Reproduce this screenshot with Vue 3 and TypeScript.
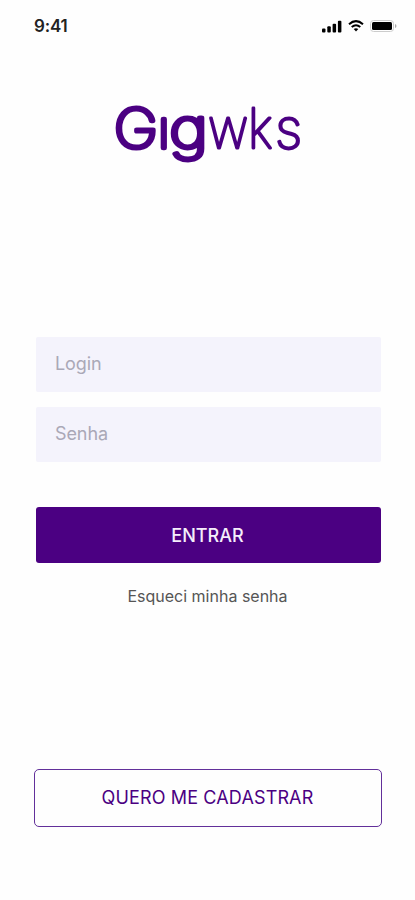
<script setup lang="ts">
import { ref } from 'vue'

interface Glyph {
  char: string
  x: number
  y: number
  sx: number
  sy: number
  bold: boolean
}

const login = ref('')
const senha = ref('')

const wordmark: Glyph[] = [
  { char: 'G', x: 0, y: 42.5, sx: 1.1, sy: 1, bold: true },
  { char: 'ı', x: 43.8, y: 42.5, sx: 1.04, sy: 0.96, bold: true },
  { char: 'g', x: 55.5, y: 42.5, sx: 1.22, sy: 1, bold: true },
  { char: 'w', x: 94.3, y: 43, sx: 0.91, sy: 1, bold: false },
  { char: 'k', x: 134, y: 43, sx: 0.93, sy: 1, bold: false },
  { char: 's', x: 161, y: 43, sx: 1.02, sy: 1, bold: false },
]
</script>

<template>
  <main class="screen">
    <header class="status">
      <span class="time">9:41</span>
      <div class="indicators">
        <svg width="20" height="13" viewBox="0 0 20 13">
          <rect x="0" y="8.5" width="3.5" height="4" rx="1" />
          <rect x="5.3" y="6.3" width="3.5" height="6.2" rx="1" />
          <rect x="10.6" y="3.7" width="3.5" height="8.8" rx="1" />
          <rect x="15.9" y="0.7" width="3.5" height="11.8" rx="1" />
        </svg>
        <svg width="16" height="12" viewBox="0 0 16 12" class="wifi">
          <path d="M1 4.2Q8-2 15 4.2" />
          <path d="M3.7 7Q8 3.4 12.3 7" />
          <path class="dot" d="M5.7 9.1Q8 7.4 10.3 9.1L8 11.5Z" />
        </svg>
        <svg width="27" height="12" viewBox="0 0 27 12">
          <rect class="shell" x="0.5" y="0.5" width="23" height="11" rx="3" />
          <rect x="2" y="2" width="20" height="8" rx="1.5" />
          <path class="cap" d="M25 4v4q1.5-.7 1.5-2T25 4Z" />
        </svg>
      </div>
    </header>

    <svg class="logo" width="190" height="64" viewBox="0 0 190 64" role="img" aria-label="Gigwks">
      <text
        v-for="g in wordmark"
        :key="g.char"
        :class="{ bold: g.bold }"
        :transform="`translate(${g.x} ${g.y}) scale(${g.sx} ${g.sy})`"
      >{{ g.char }}</text>
    </svg>

    <form class="form" @submit.prevent>
      <input v-model="login" type="text" placeholder="Login" />
      <input v-model="senha" type="password" placeholder="Senha" />
      <button class="enter" type="submit">ENTRAR</button>
    </form>
    <a class="forgot">Esqueci minha senha</a>
    <button class="register" type="button">QUERO ME CADASTRAR</button>
  </main>
</template>

<style>
body {
  background: #fefefe;
}
</style>

<style scoped>
.screen {
  box-sizing: border-box;
  width: 415px;
  height: 900px;
  display: flex;
  flex-direction: column;
  background: #fefefe;
  font-family: Inter, "Liberation Sans", sans-serif;
}
.status {
  display: flex;
  justify-content: space-between;
  align-items: center;
  height: 52px;
  padding: 0 18px 0 34px;
}
.time {
  font-size: 17px;
  font-weight: 600;
  letter-spacing: -0.2px;
  color: #222;
}
.indicators {
  display: flex;
  align-items: center;
  gap: 6px;
}
.wifi path {
  fill: none;
  stroke: #000;
  stroke-width: 2;
}
.wifi .dot {
  fill: #000;
  stroke: none;
}
.shell {
  fill: none;
  stroke: #ccc;
}
.cap {
  fill: #aaa;
}
.logo {
  margin: 53px 0 0 114px;
  overflow: visible;
}
.logo text {
  font-family: Inter, sans-serif;
  font-size: 54px;
  font-weight: 100;
  fill: #4b0082;
  stroke: #4b0082;
  stroke-width: 2.8px;
  stroke-linejoin: round;
}
.logo .bold {
  stroke-width: 4.8px;
}
.form {
  display: flex;
  flex-direction: column;
  margin: 168px 34px 0 36px;
}
.form input {
  box-sizing: border-box;
  height: 55px;
  margin: 0 0 15px;
  padding: 0 20px 2px 19px;
  border: 0;
  border-radius: 2px;
  background: #f4f3fc;
  font: 400 18px Inter, sans-serif;
  letter-spacing: -0.1px;
  color: #333;
  outline: none;
}
.form input::placeholder {
  color: #aaa8b7;
  opacity: 1;
}
button {
  font-family: Inter, sans-serif;
  font-size: 18px;
  padding: 0;
}
.enter {
  height: 56px;
  margin-top: 30px;
  padding-right: 2px;
  border: 0;
  border-radius: 3px;
  background: #4b0082;
  color: #f5eefb;
  font-weight: 500;
}
.forgot {
  margin-top: 22px;
  text-align: center;
  font-size: 16px;
  line-height: 22px;
  color: #555;
}
.register {
  box-sizing: border-box;
  height: 58px;
  margin: 162px 33px 0 34px;
  padding: 0 1px 2px 0;
  border: 1.5px solid #62309a;
  border-radius: 5px;
  background: #fefefe;
  color: #4b0082;
  letter-spacing: 0.14px;
}
</style>
